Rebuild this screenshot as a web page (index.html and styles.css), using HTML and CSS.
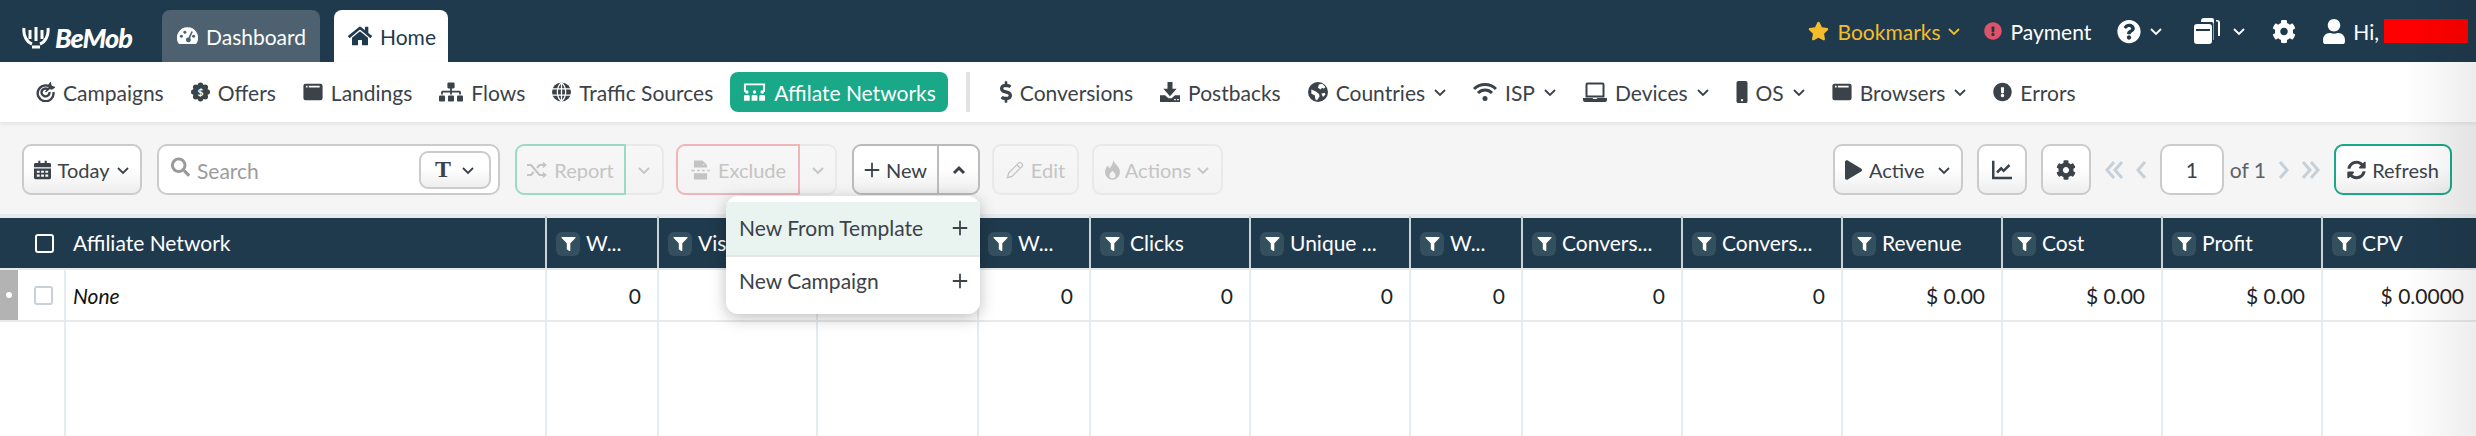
FILE: index.html
```html
<!DOCTYPE html>
<html lang="en">
<head>
  <meta charset="UTF-8">
  <title>BeMob - Affiliate Networks</title>
  <link rel="stylesheet" href="styles.css">
</head>
<body>
  <svg class="sprite" aria-hidden="true">
    <defs>
      <path id="filter" d="M487.976 0H24.028C2.71 0-8.047 25.866 7.058 40.971L192 225.941V432c0 7.831 3.821 15.17 10.237 19.662l80 55.98C298.02 518.69 320 507.493 320 487.98V225.941l184.947-184.97C520.021 25.896 509.338 0 487.976 0z"/>
      <path id="cog" d="M487.4 315.7l-42.6-24.6c4.3-23.2 4.3-47 0-70.2l42.6-24.6c4.9-2.8 7.1-8.6 5.5-14-11.1-35.6-30-67.8-54.7-94.6-3.8-4.1-10-5.1-14.8-2.3L380.8 110c-17.9-15.4-38.5-27.3-60.8-35.1V25.8c0-5.6-3.9-10.5-9.4-11.7-36.7-8.2-74.3-7.8-109.2 0-5.5 1.2-9.4 6.1-9.4 11.7V75c-22.2 7.9-42.8 19.8-60.8 35.1L88.7 85.5c-4.9-2.8-11-1.9-14.8 2.3-24.7 26.7-43.6 58.9-54.7 94.6-1.7 5.4.6 11.2 5.5 14L67.3 221c-4.3 23.2-4.3 47 0 70.2l-42.6 24.6c-4.9 2.8-7.1 8.6-5.5 14 11.1 35.6 30 67.8 54.7 94.6 3.8 4.1 10 5.1 14.8 2.3l42.6-24.6c17.9 15.4 38.5 27.3 60.8 35.1v49.2c0 5.6 3.9 10.5 9.4 11.7 36.7 8.2 74.3 7.8 109.2 0 5.5-1.2 9.4-6.1 9.4-11.7v-49.2c22.2-7.9 42.8-19.8 60.8-35.1l42.6 24.6c4.9 2.8 11 1.9 14.8-2.3 24.7-26.7 43.6-58.9 54.7-94.6 1.5-5.5-.7-11.3-5.6-14.1zM256 336c-44.1 0-80-35.9-80-80s35.9-80 80-80 80 35.9 80 80-35.9 80-80 80z"/>
      <path id="excl" d="M504 256c0 136.997-111.043 248-248 248S8 392.997 8 256C8 119.083 119.043 8 256 8s248 111.083 248 248zm-248 50c-25.405 0-46 20.595-46 46s20.595 46 46 46 46-20.595 46-46-20.595-46-46-46zm-43.673-165.346l7.418 136c.347 6.364 5.609 11.346 11.982 11.346h48.546c6.373 0 11.635-4.982 11.982-11.346l7.418-136c.375-6.874-5.098-12.654-11.982-12.654h-63.383c-6.884 0-12.356 5.78-11.981 12.654z"/>
      <path id="window" fill-rule="evenodd" d="M3 2h18a2.5 2.5 0 0 1 2.5 2.5v15a2.5 2.5 0 0 1-2.5 2.5H3a2.5 2.5 0 0 1-2.5-2.5v-15A2.5 2.5 0 0 1 3 2zM3.5 4.5v2h2v-2zM7 4.5v2h13v-2z"/>
      <polyline id="chev" points="2,4 7,9 12,4" fill="none" stroke="currentColor" stroke-width="1.8"/>
      <path id="plus" d="M10 1v18M1 10h18" fill="none" stroke="currentColor" stroke-width="2.2"/>
    </defs>
  </svg>

  <header class="topbar">
    <a class="logo">
      <svg class="logo-mark" viewBox="0 0 28 24"><path d="M2 3c-1 8 3 14 8 16M26 3c1 8-3 14-8 16M10 22h8M8 5v9M14 2v14M20 5v9" fill="none" stroke="currentColor" stroke-width="3"/></svg>
      <span>BeMob</span>
    </a>
    <a class="tab tab-dark">
      <svg class="ico w21" viewBox="0 0 24 20"><path fill-rule="evenodd" d="M12 0a12 12 0 0 0-10.5 18c.3.6.9 1 1.500 1h18c.6 0 1.200-.4 1.500-1A12 12 0 0 0 12 0zM5 8.500a1.800 1.800 0 1 0 .01 0zM9 4a1.800 1.800 0 1 0 .01 0zM19 8.500a1.800 1.800 0 1 0 .01 0zM16.500 4.500l-3.400 7.100a2.800 2.800 0 1 0 1.900.8l3.100-7.200z"/></svg>
      Dashboard
    </a>
    <a class="tab tab-light">
      <svg class="ico w24" viewBox="0 0 576 512"><path d="M280.37 148.26L96 300.11V464a16 16 0 0 0 16 16l112.06-.29a16 16 0 0 0 15.92-16V368a16 16 0 0 1 16-16h64a16 16 0 0 1 16 16v95.64a16 16 0 0 0 16 16.05L464 480a16 16 0 0 0 16-16V300L295.67 148.26a12.19 12.19 0 0 0-15.3 0zM571.6 251.47L488 182.56V44.05a12 12 0 0 0-12-12h-56a12 12 0 0 0-12 12v72.61L318.47 43a48 48 0 0 0-61 0L4.34 251.47a12 12 0 0 0-1.6 16.9l25.5 31A12 12 0 0 0 45.15 301l235.22-193.74a12.19 12.19 0 0 1 15.3 0L530.9 301a12 12 0 0 0 16.9-1.6l25.5-31a12 12 0 0 0-1.7-16.93z"/></svg>
      Home
    </a>

    <div class="top-right">
      <a class="top-link bookmarks">
        <svg class="ico w21" viewBox="0 0 576 512"><path d="M259.3 17.8L194 150.2 47.9 171.5c-26.2 3.8-36.7 36.1-17.7 54.6l105.7 103-25 145.5c-4.5 26.3 23.2 46 46.4 33.7L288 439.6l130.7 68.7c23.2 12.2 50.9-7.4 46.4-33.7l-25-145.5 105.7-103c19-18.5 8.5-50.8-17.7-54.6L382 150.2 316.7 17.8c-11.7-23.6-45.6-23.9-57.4 0z"/></svg>
        Bookmarks
        <svg class="chev" viewBox="0 0 14 12"><use href="#chev"/></svg>
      </a>
      <a class="top-link payment">
        <svg class="ico w18 red" viewBox="0 0 512 512"><use href="#excl"/></svg>
        Payment
      </a>
      <a class="top-link help">
        <svg class="ico w24" viewBox="0 0 512 512"><path d="M504 256c0 136.997-111.043 248-248 248S8 392.997 8 256C8 119.083 119.043 8 256 8s248 111.083 248 248zM262.655 90c-54.497 0-89.255 22.957-116.549 63.758-3.536 5.286-2.353 12.415 2.715 16.258l34.699 26.31c5.205 3.947 12.621 3.008 16.665-2.122 17.864-22.658 30.113-35.797 57.303-35.797 20.429 0 45.698 13.148 45.698 32.958 0 14.976-12.363 22.667-32.534 33.976C247.128 238.528 216 254.941 216 296v4c0 6.627 5.373 12 12 12h56c6.627 0 12-5.373 12-12v-1.333c0-28.462 83.186-29.647 83.186-106.667 0-58.002-60.165-102-116.531-102zM256 338c-25.365 0-46 20.635-46 46 0 25.364 20.635 46 46 46s46-20.636 46-46c0-25.365-20.635-46-46-46z"/></svg>
        <svg class="chev" viewBox="0 0 14 12"><use href="#chev"/></svg>
      </a>
      <a class="top-link copies">
        <svg class="ico w26" viewBox="0 0 26 26"><path fill-rule="evenodd" d="M3 6h12a3 3 0 0 1 3 3v14a3 3 0 0 1-3 3H3a3 3 0 0 1-3-3V9a3 3 0 0 1 3-3zM2 11v2h14v-2z"/><path d="M7 4V3a3 3 0 0 1 3-3h8a2 2 0 0 1 2 2v20h-.5V6a2 2 0 0 0-2-2zM22 2h1a3 3 0 0 1 3 3v13h-2V5a1 1 0 0 0-2-1z"/></svg>
        <svg class="chev" viewBox="0 0 14 12"><use href="#chev"/></svg>
      </a>
      <a class="top-link gear">
        <svg class="ico w24" viewBox="0 0 512 512"><use href="#cog"/></svg>
      </a>
      <a class="top-link user">
        <svg class="ico w22" viewBox="0 0 448 512"><path d="M224 256c70.7 0 128-57.3 128-128S294.7 0 224 0 96 57.3 96 128s57.3 128 128 128zm89.6 32h-16.7c-22.2 10.2-46.9 16-72.9 16s-50.6-5.8-72.9-16h-16.7C60.2 288 0 348.2 0 422.4V464c0 26.5 21.5 48 48 48h352c26.5 0 48-21.5 48-48v-41.6c0-74.2-60.2-134.4-134.4-134.4z"/></svg>
        Hi,
        <span class="redacted"></span>
      </a>
    </div>
  </header>

  <nav class="subnav">
    <a class="nav-item">
      <svg class="ico w19" viewBox="0 0 24 24"><path d="M20 7.500A10 10 0 1 0 22 12M16 9.500A5 5 0 1 0 17 12" fill="none" stroke="currentColor" stroke-width="3"/><path d="M12 12l8-8M18 1l1 4 4 1-3 2-3-1-1-3z" stroke="currentColor" stroke-width="2"/></svg>
      Campaigns
    </a>
    <a class="nav-item">
      <svg class="ico w19" viewBox="0 0 24 24"><circle cx="12" cy="12" r="9.5"/><circle cx="12" cy="3.5" r="3.5"/><circle cx="12" cy="20.5" r="3.5"/><circle cx="3.5" cy="12" r="3.5"/><circle cx="20.5" cy="12" r="3.5"/><circle cx="6" cy="6" r="3.5"/><circle cx="18" cy="6" r="3.5"/><circle cx="6" cy="18" r="3.5"/><circle cx="18" cy="18" r="3.5"/><text class="badge-dollar" x="12" y="17">$</text></svg>
      Offers
    </a>
    <a class="nav-item">
      <svg class="ico w20" viewBox="0 0 24 24"><use href="#window"/></svg>
      Landings
    </a>
    <a class="nav-item">
      <svg class="ico w24" viewBox="0 0 640 512"><path d="M128 352H32c-17.67 0-32 14.33-32 32v96c0 17.67 14.33 32 32 32h96c17.67 0 32-14.33 32-32v-96c0-17.67-14.33-32-32-32zm-24-80h192v48h48v-48h192v48h48v-57.59c0-21.17-17.23-38.41-38.41-38.41H344v-64h40c17.67 0 32-14.33 32-32V32c0-17.67-14.33-32-32-32H256c-17.67 0-32 14.33-32 32v96c0 17.67 14.33 32 32 32h40v64H94.41C73.23 224 56 241.23 56 262.41V320h48v-48zm264 80h-96c-17.67 0-32 14.33-32 32v96c0 17.67 14.33 32 32 32h96c17.67 0 32-14.33 32-32v-96c0-17.67-14.33-32-32-32zm240 0h-96c-17.67 0-32 14.33-32 32v96c0 17.67 14.33 32 32 32h96c17.67 0 32-14.33 32-32v-96c0-17.67-14.33-32-32-32z"/></svg>
      Flows
    </a>
    <a class="nav-item">
      <svg class="ico w19" viewBox="0 0 24 24"><circle cx="12" cy="12" r="12"/><path d="M12 0c-7 6-7 18 0 24M12 0c7 6 7 18 0 24M12 0v24M0 8h24M0 16h24" fill="none" stroke="#fff" stroke-width="1.6"/></svg>
      Traffic Sources
    </a>
    <a class="nav-item nav-active">
      <svg class="ico w23" viewBox="0 0 24 20"><path d="M2 10V2h20v8" fill="none" stroke="currentColor" stroke-width="2"/><circle cx="4" cy="10" r="1.8"/><circle cx="12" cy="10" r="1.8"/><circle cx="20" cy="10" r="1.8"/><path d="M1 14.5a1.5 1.5 0 0 1 1.5-1.5h3A1.5 1.5 0 0 1 7 14.5V19H1zM9 14.5a1.5 1.5 0 0 1 1.5-1.5h3a1.5 1.5 0 0 1 1.5 1.5V19H9zM17 14.5a1.5 1.5 0 0 1 1.5-1.5h3a1.5 1.5 0 0 1 1.5 1.5V19h-6z"/></svg>
      Affilate Networks
    </a>
    <span class="nav-divider"></span>
    <a class="nav-item">
      <svg class="ico w12" viewBox="0 0 288 512"><path d="M209.2 233.4l-108-31.6C88.7 198.2 80 186.5 80 173.5c0-16.3 13.2-29.5 29.5-29.5h66.3c12.2 0 24.2 3.7 34.2 10.5 6.1 4.1 14.3 3.1 19.5-2l34.8-34c7.1-6.9 6.1-18.4-1.8-24.5C238 74.8 207.4 64.1 176 64V16c0-8.8-7.2-16-16-16h-32c-8.8 0-16 7.2-16 16v48h-2.5C45.8 64-5.4 118.7.5 183.6c4.2 46.1 39.4 83.6 83.8 96.6l102.5 30c12.5 3.7 21.2 15.3 21.2 28.3 0 16.3-13.2 29.5-29.5 29.5h-66.3C100 368 88 364.3 78 357.5c-6.1-4.1-14.3-3.1-19.5 2l-34.8 34c-7.1 6.9-6.1 18.4 1.8 24.5 24.5 19.2 55.1 29.9 86.5 30v48c0 8.8 7.2 16 16 16h32c8.8 0 16-7.2 16-16v-48.2c46.6-.9 90.3-28.6 105.7-72.7 21.5-61.6-14.6-124.8-72.5-141.7z"/></svg>
      Conversions
    </a>
    <a class="nav-item">
      <svg class="ico w20" viewBox="0 0 24 24"><path fill-rule="evenodd" d="M9 0h6v8h5l-8 9-8-9h5zM0 16h6l4 3.5h4l4-3.5h6v8H0zM17 20.5v1.500h2v-1.500zM20.500 20.500v1.500h2v-1.500z"/></svg>
      Postbacks
    </a>
    <a class="nav-item">
      <svg class="ico w20" viewBox="0 0 24 24"><circle cx="12" cy="12" r="12"/><path d="M13 3l4-1 4 4-2 2-2-1-2 2-3-2zM4 9l5 2 4 3 1 3-3 5-2-1-1-5-4-2zM16 14l4-1 1 2-3 3z" fill="#fff"/></svg>
      Countries
      <svg class="chev" viewBox="0 0 14 12"><use href="#chev"/></svg>
    </a>
    <a class="nav-item">
      <svg class="ico w24" viewBox="0 0 24 20"><path d="M1 7c6-6 16-6 22 0M5 11c4-4 10-4 14 0" fill="none" stroke="currentColor" stroke-width="3"/><circle cx="12" cy="16.5" r="2.5"/></svg>
      ISP
      <svg class="chev" viewBox="0 0 14 12"><use href="#chev"/></svg>
    </a>
    <a class="nav-item">
      <svg class="ico w24" viewBox="0 0 24 20"><path d="M4.5 1.5h15a1 1 0 0 1 1 1v12h-17v-12a1 1 0 0 1 1-1z" fill="none" stroke="currentColor" stroke-width="2"/><path d="M0 16h9.500l1 1h3l1-1H24v2a2 2 0 0 1-2 2H2a2 2 0 0 1-2-2z"/></svg>
      Devices
      <svg class="chev" viewBox="0 0 14 12"><use href="#chev"/></svg>
    </a>
    <a class="nav-item">
      <svg class="ico w12" viewBox="0 0 12 24"><path fill-rule="evenodd" d="M2 0h8a2 2 0 0 1 2 2v20a2 2 0 0 1-2 2H2a2 2 0 0 1-2-2V2a2 2 0 0 1 2-2zM6 19.500a1.300 1.300 0 1 0 .01 0z"/></svg>
      OS
      <svg class="chev" viewBox="0 0 14 12"><use href="#chev"/></svg>
    </a>
    <a class="nav-item">
      <svg class="ico w20" viewBox="0 0 24 24"><use href="#window"/></svg>
      Browsers
      <svg class="chev" viewBox="0 0 14 12"><use href="#chev"/></svg>
    </a>
    <a class="nav-item">
      <svg class="ico w19" viewBox="0 0 512 512"><use href="#excl"/></svg>
      Errors
    </a>
  </nav>

  <section class="toolbar">
    <button class="btn btn-today">
      <svg class="ico w17" viewBox="0 0 24 26"><path fill-rule="evenodd" d="M6 0h3v3h6V0h3v3h4a2 2 0 0 1 2 2v4H0V5a2 2 0 0 1 2-2h4zM0 11h24v13a2 2 0 0 1-2 2H2a2 2 0 0 1-2-2zM4 14v3h4v-3zM10 14v3h4v-3zM16 14v3h4v-3zM4 19.500v3h4v-3zM10 19.500v3h4v-3zM16 19.500v3h4v-3z"/></svg>
      Today
      <svg class="chev" viewBox="0 0 14 12"><use href="#chev"/></svg>
    </button>
    <div class="search">
      <svg class="ico w19 search-ico" viewBox="0 0 512 512"><path d="M505 442.7L405.3 343c-4.5-4.5-10.6-7-17-7H372c27.6-35.3 44-79.7 44-128C416 93.1 322.9 0 208 0S0 93.1 0 208s93.1 208 208 208c48.3 0 92.7-16.4 128-44v16.3c0 6.4 2.5 12.5 7 17l99.7 99.7c9.4 9.4 24.6 9.4 33.9 0l28.3-28.3c9.4-9.4 9.4-24.6.1-34zM208 336c-70.7 0-128-57.2-128-128 0-70.7 57.2-128 128-128 70.7 0 128 57.2 128 128 0 70.7-57.2 128-128 128z"/></svg>
      <input class="search-input" type="text" placeholder="Search">
      <button class="btn btn-type">
        <span class="type-t">T</span>
        <svg class="chev" viewBox="0 0 14 12"><use href="#chev"/></svg>
      </button>
    </div>

    <div class="split">
      <button class="btn btn-off btn-report">
        <svg class="ico w20" viewBox="0 0 24 20"><path d="M0 4h5l10 12h5M0 16h5l3-3.6M12 7.6L15 4h5" fill="none" stroke="currentColor" stroke-width="2.6"/><path d="M19 0l5 4-5 4zM19 12l5 4-5 4z"/></svg>
        Report
      </button>
      <button class="btn btn-off btn-caret"><svg class="chev" viewBox="0 0 14 12"><use href="#chev"/></svg></button>
    </div>
    <div class="split">
      <button class="btn btn-off btn-exclude">
        <svg class="ico w21" viewBox="0 0 24 24" fill="none" stroke="currentColor" stroke-width="1.8"><path d="M5 9V1.5h9l5 5V9M5 16v6.500h14V16M14 1.500v5h5M1 12.500h4M8 12.500h3M14 12.500h3M20 12.500h3"/></svg>
        Exclude
      </button>
      <button class="btn btn-off btn-caret btn-caret-x"><svg class="chev" viewBox="0 0 14 12"><use href="#chev"/></svg></button>
    </div>
    <div class="split split-new">
      <button class="btn btn-new">
        <svg class="plus" viewBox="0 0 20 20"><use href="#plus"/></svg>
        New
      </button>
      <button class="btn btn-new-caret">
        <svg class="chev chev-up" viewBox="0 0 14 12"><polyline points="2,9 7,4 12,9" fill="none" stroke="currentColor" stroke-width="3"/></svg>
      </button>
      <div class="dropdown">
        <a class="drop-item drop-hover">New From Template <svg class="plus" viewBox="0 0 20 20"><use href="#plus"/></svg></a>
        <a class="drop-item">New Campaign <svg class="plus" viewBox="0 0 20 20"><use href="#plus"/></svg></a>
      </div>
    </div>
    <button class="btn btn-off btn-edit">
      <svg class="ico w18" viewBox="0 0 24 24"><path d="M2 22l1.5-6L17 2.5a2 2 0 0 1 3 0l1.5 1.5a2 2 0 0 1 0 3L8 20.5zM14.5 5l4.5 4.5" fill="none" stroke="currentColor" stroke-width="1.8"/></svg>
      Edit
    </button>
    <button class="btn btn-off btn-actions">
      <svg class="ico w15" viewBox="0 0 20 26"><path d="M11 0c1 5 9 8 9 16a10 10 0 0 1-20 0c0-4 2-7 4-9l2 4c2-3 5-6 5-11zM10 14c-2 2-4 4-4 6a4 4 0 0 0 8 0c0-2-2-4-4-6z" fill-rule="evenodd"/></svg>
      Actions
      <svg class="chev" viewBox="0 0 14 12"><use href="#chev"/></svg>
    </button>

    <div class="tools-right">
      <button class="btn btn-active">
        <svg class="ico w17" viewBox="0 0 448 512"><path d="M424.4 214.7L72.4 6.6C43.8-10.3 0 6.1 0 47.9V464c0 37.5 40.7 60.1 72.4 41.3l352-208c31.4-18.5 31.5-64.1 0-82.6z"/></svg>
        Active
        <svg class="chev chev-wide" viewBox="0 0 14 12"><use href="#chev"/></svg>
      </button>
      <button class="btn btn-square">
        <svg class="ico w20" viewBox="0 0 24 22"><path d="M1.5 0v20.5H24M6 14l5-5 3 3 7-7" fill="none" stroke="currentColor" stroke-width="3"/></svg>
      </button>
      <button class="btn btn-square">
        <svg class="ico w20" viewBox="0 0 512 512"><use href="#cog"/></svg>
      </button>
      <div class="pager">
        <svg class="pg pg-double" viewBox="0 0 20 20"><path d="M9 2l-7 8 7 8M17 2l-7 8 7 8" fill="none" stroke="currentColor" stroke-width="3"/></svg>
        <svg class="pg pg-single" viewBox="0 0 12 20"><path d="M10 2l-7 8 7 8" fill="none" stroke="currentColor" stroke-width="3"/></svg>
        <input class="page-input" type="text" value="1">
        <span class="page-of">of 1</span>
        <svg class="pg pg-single" viewBox="0 0 12 20"><path d="M2 2l7 8-7 8" fill="none" stroke="currentColor" stroke-width="3"/></svg>
        <svg class="pg pg-double" viewBox="0 0 20 20"><path d="M3 2l7 8-7 8M11 2l7 8-7 8" fill="none" stroke="currentColor" stroke-width="3"/></svg>
      </div>
      <button class="btn btn-refresh">
        <svg class="ico w19" viewBox="0 0 512 512"><path d="M370.72 133.28C339.458 104.008 298.888 87.962 255.848 88c-77.458.068-144.328 53.178-162.791 126.85-1.344 5.363-6.122 9.15-11.651 9.15H24.103c-7.498 0-13.194-6.807-11.807-14.176C33.933 94.924 134.813 8 256 8c66.448 0 126.791 26.136 171.315 68.685L463.03 40.97C478.149 25.851 504 36.559 504 57.941V192c0 13.255-10.745 24-24 24H345.941c-21.382 0-32.09-25.851-16.971-40.971l41.75-41.749zM32 296h134.059c21.382 0 32.09 25.851 16.971 40.971l-41.75 41.75c31.262 29.273 71.835 45.319 114.876 45.28 77.418-.07 144.315-53.144 162.787-126.849 1.344-5.363 6.122-9.15 11.651-9.15h57.304c7.498 0 13.194 6.807 11.807 14.176C478.067 417.076 377.187 504 256 504c-66.448 0-126.791-26.136-171.315-68.685L48.97 471.03C33.851 486.149 8 475.441 8 454.059V320c0-13.255 10.745-24 24-24z"/></svg>
        Refresh
      </button>
    </div>
  </section>

  <section class="table">
    <div class="row row-head">
      <div class="th th-check"><span class="check check-head"></span></div>
      <div class="th th-name">Affiliate Network</div>
      <div class="th"><svg class="fbadge" viewBox="-160 -140 792 792"><use href="#filter"/></svg>W...</div>
      <div class="th"><svg class="fbadge" viewBox="-160 -140 792 792"><use href="#filter"/></svg>Visits</div>
      <div class="th"></div>
      <div class="th"><svg class="fbadge" viewBox="-160 -140 792 792"><use href="#filter"/></svg>W...</div>
      <div class="th"><svg class="fbadge" viewBox="-160 -140 792 792"><use href="#filter"/></svg>Clicks</div>
      <div class="th"><svg class="fbadge" viewBox="-160 -140 792 792"><use href="#filter"/></svg>Unique ...</div>
      <div class="th"><svg class="fbadge" viewBox="-160 -140 792 792"><use href="#filter"/></svg>W...</div>
      <div class="th"><svg class="fbadge" viewBox="-160 -140 792 792"><use href="#filter"/></svg>Convers...</div>
      <div class="th"><svg class="fbadge" viewBox="-160 -140 792 792"><use href="#filter"/></svg>Convers...</div>
      <div class="th"><svg class="fbadge" viewBox="-160 -140 792 792"><use href="#filter"/></svg>Revenue</div>
      <div class="th"><svg class="fbadge" viewBox="-160 -140 792 792"><use href="#filter"/></svg>Cost</div>
      <div class="th"><svg class="fbadge" viewBox="-160 -140 792 792"><use href="#filter"/></svg>Profit</div>
      <div class="th"><svg class="fbadge" viewBox="-160 -140 792 792"><use href="#filter"/></svg>CPV</div>
    </div>
    <div class="row row-data">
      <div class="td td-check"><span class="strip"><i class="strip-dot"></i></span><span class="check"></span></div>
      <div class="td td-name">None</div>
      <div class="td">0</div>
      <div class="td"></div>
      <div class="td"></div>
      <div class="td">0</div>
      <div class="td">0</div>
      <div class="td">0</div>
      <div class="td">0</div>
      <div class="td">0</div>
      <div class="td">0</div>
      <div class="td">$ 0.00</div>
      <div class="td">$ 0.00</div>
      <div class="td">$ 0.00</div>
      <div class="td td-last">$ 0.0000</div>
    </div>
    <div class="row row-empty">
      <div class="td td-check"></div><div class="td"></div><div class="td"></div><div class="td"></div><div class="td"></div>
      <div class="td"></div><div class="td"></div><div class="td"></div><div class="td"></div><div class="td"></div>
      <div class="td"></div><div class="td"></div><div class="td"></div><div class="td"></div><div class="td"></div>
    </div>
  </section>

  <div class="edge-shade"></div>
</body>
</html>
```

FILE: styles.css
```css
/* page */
* {
  box-sizing: border-box;
}
html, body {
  margin: 0;
  padding: 0;
}
body {
  position: relative;
  width: 2476px;
  height: 436px;
  overflow: hidden;
  background-color: #fff;
  font-family: Lato, 'Liberation Sans', sans-serif;
  font-size: 21px;
  color: #3b4249;
}
.sprite {
  position: absolute;
  width: 0;
  height: 0;
}

/* icons */
.ico {
  flex: none;
  fill: currentColor;
  height: 20px;
}
.w12 { width: 12px; height: 22px; }
.w15 { width: 15px; }
.w17 { width: 17px; height: 22px; }
.w18 { width: 18px; }
.w19 { width: 19px; }
.w20 { width: 20px; }
.w21 { width: 21px; }
.w22 { width: 22px; }
.w23 { width: 23px; }
.w24 { width: 24px; height: 22px; }
.w26 { width: 26px; height: 26px; }
.red { color: #e05268; }
.chev {
  flex: none;
  width: 14px;
  height: 12px;
}
.plus {
  flex: none;
  width: 16px;
  height: 16px;
}
.badge-dollar {
  font-size: 13px;
  font-weight: 700;
  fill: #fff;
  text-anchor: middle;
}

/* top bar */
.topbar {
  display: flex;
  align-items: flex-end;
  height: 62px;
  padding-left: 22px;
  background-color: #1f3a4d;
  color: #fff;
}
.logo {
  display: flex;
  align-items: center;
  align-self: center;
  gap: 5px;
  width: 140px;
  font-size: 27px;
  font-weight: 900;
  font-style: italic;
  letter-spacing: -1px;
  margin-top: 12px;
}
.logo-mark {
  width: 28px;
  height: 24px;
}
.tab {
  display: flex;
  align-items: center;
  gap: 8px;
  height: 52px;
  border-radius: 8px 8px 0 0;
}
.tab-dark {
  width: 158px;
  padding-left: 15px;
  background-color: #4d6170;
}
.tab-light {
  width: 114px;
  margin-left: 14px;
  padding-left: 14px;
  background-color: #fff;
  color: #1f3a4d;
}
.top-right {
  display: flex;
  align-items: center;
  align-self: stretch;
  margin-left: auto;
  padding-right: 8px;
}
.top-link {
  display: flex;
  align-items: center;
  gap: 9px;
}
.top-link .w24, .top-link .w22 {
  height: 25px;
}
.bookmarks { color: #f5bd2a; margin-right: 23px; }
.bookmarks .chev { margin-left: -3px; }
.payment { margin-right: 26px; }
.help { margin-right: 31px; gap: 8px; }
.copies { margin-right: 26px; gap: 12px; }
.gear { margin-right: 27px; }
.user { gap: 8px; }
.redacted {
  display: block;
  width: 84px;
  height: 24px;
  margin-left: -3px;
  background-color: #f00;
}

/* second nav */
.subnav {
  position: relative;
  z-index: 2;
  display: flex;
  align-items: center;
  gap: 27px;
  height: 60px;
  padding: 0 0 0 36px;
  background-color: #fff;
  box-shadow: 0 2px 4px rgba(0, 0, 0, 0.08);
}
.nav-item {
  display: flex;
  align-items: center;
  gap: 8px;
  white-space: nowrap;
}
.nav-item .chev {
  margin-right: -1px;
}
.nav-active {
  height: 40px;
  margin-left: -10px;
  padding: 0 12px 0 13px;
  border-radius: 8px;
  background-color: #19a888;
  color: #fff;
}
.nav-divider {
  width: 4px;
  height: 40px;
  margin: 0 3px 0 -9px;
  background-color: #e2e2e2;
}

/* toolbar */
.toolbar {
  display: flex;
  align-items: flex-start;
  height: 92px;
  padding: 22px 24px 0 22px;
  background-color: #f5f5f5;
}
.btn {
  display: flex;
  align-items: center;
  justify-content: center;
  gap: 8px;
  height: 51px;
  padding: 0;
  border: 2px solid #cbcbcb;
  border-radius: 9px;
  background: linear-gradient(#fff 45%, #eeeeee);
  font-family: inherit;
  font-size: 20px;
  color: #3b4249;
}
.btn-today {
  width: 120px;
  gap: 7px;
}
.search {
  display: flex;
  align-items: center;
  width: 343px;
  height: 51px;
  margin: 0 15px;
  padding-left: 12px;
  border: 2px solid #cbcbcb;
  border-radius: 10px;
  background-color: #fff;
}
.search-ico {
  color: #9a9a9a;
  margin-top: -6px;
}
.search-input {
  flex: 1;
  min-width: 0;
  height: 30px;
  margin-top: 2px;
  padding: 0 0 0 7px;
  border: none;
  outline: none;
  background: none;
  font-family: inherit;
  font-size: 21px;
}
.search-input::placeholder {
  color: #9c9c9c;
}
.btn-type {
  width: 72px;
  height: 38px;
  margin-right: 7px;
  gap: 10px;
}
.type-t {
  font-family: 'Liberation Serif', serif;
  font-size: 24px;
  font-weight: 700;
}
.split {
  display: flex;
  margin-right: 12px;
}
.btn-off {
  border-color: #e9e9e9;
  background: linear-gradient(#f7f7f7, #f3f3f3);
  color: #c4c4c4;
}
.btn-report {
  width: 111px;
  gap: 7px;
  border-color: #9bdac8;
  border-radius: 9px 0 0 9px;
}
.btn-exclude {
  width: 124px;
  gap: 7px;
  border-color: #f0b4b9;
  border-radius: 9px 0 0 9px;
}
.btn-caret {
  width: 38px;
  border-left: none;
  border-radius: 0 9px 9px 0;
}
.btn-caret-x {
  width: 37px;
}
.split-new {
  position: relative;
  margin-left: 3px;
}
.btn-new {
  width: 87px;
  gap: 6px;
  border-color: #bbbbbb;
  border-radius: 9px 0 0 9px;
}
.btn-new-caret {
  width: 41px;
  border-color: #bbbbbb;
  border-left: none;
  border-radius: 0 9px 9px 0;
}
.dropdown {
  position: absolute;
  top: 52px;
  right: 0;
  z-index: 5;
  width: 254px;
  height: 118px;
  padding-top: 6px;
  border-radius: 12px;
  background-color: #fff;
  box-shadow: 0 4px 16px rgba(0, 0, 0, 0.25);
}
.drop-item {
  display: flex;
  align-items: center;
  justify-content: space-between;
  height: 47px;
  padding: 0 12px 0 13px;
  white-space: nowrap;
}
.drop-hover {
  height: 55px;
  padding-bottom: 2px;
  background-color: #e9f4f1;
  border-bottom: 2px solid #e4e8e7;
}
.btn-edit {
  width: 87px;
  gap: 7px;
}
.btn-actions {
  width: 131px;
  margin-left: 13px;
  gap: 5px;
}
.tools-right {
  display: flex;
  align-items: flex-start;
  gap: 14px;
  margin-left: auto;
}
.btn-active {
  width: 130px;
  gap: 7px;
}
.chev-wide {
  margin-left: 5px;
}
.btn-square {
  width: 50px;
}
.pager {
  display: flex;
  align-items: center;
  height: 51px;
  color: #c6d0d8;
}
.pg {
  flex: none;
  height: 20px;
}
.pg-double { width: 20px; }
.pg-single { width: 12px; margin: 0 10px; }
.page-input {
  width: 64px;
  height: 51px;
  margin-left: 3px;
  border: 2px solid #cbcbcb;
  border-radius: 10px;
  background-color: #fff;
  outline: none;
  text-align: center;
  font-family: inherit;
  font-size: 21px;
  color: #3b4249;
}
.page-of {
  margin: 0 2px 0 6px;
  color: #5b6269;
}
.btn-refresh {
  width: 118px;
  gap: 6px;
  border-color: #19a888;
}

/* table */
.table {
  padding-top: 4px;
  background-color: #e6eaed;
}
.row {
  display: grid;
  grid-template-columns: 64px 481px 112px 159px 161px 112px 160px 160px 112px 160px 160px 160px 160px 160px 155px;
}
.row-head {
  height: 50px;
  margin-bottom: 2px;
  background-color: #1f3a4d;
  color: #fff;
}
.row-data {
  height: 50px;
  margin-bottom: 2px;
  background-color: #fff;
}
.row-empty {
  height: 114px;
  background-color: #fff;
}
.th {
  position: relative;
  display: flex;
  align-items: center;
  gap: 6px;
  padding: 0 0 2px 9px;
  border-left: 2px solid #cbd2d6;
  white-space: nowrap;
}
.th::before {
  content: "";
  position: absolute;
  top: -2px;
  left: -2px;
  width: 2px;
  height: 2px;
  background-color: #cbd2d6;
}
.th-check {
  padding: 0 0 0 35px;
  border-left: none;
}
.th-check::before, .th-name::before {
  display: none;
}
.th-name {
  padding-left: 9px;
  border-left: none;
}
.fbadge {
  flex: none;
  width: 24px;
  height: 24px;
  margin-top: 4px;
  padding: 1px;
  border-radius: 6px;
  background-color: #34505f;
  fill: #fff;
}
.td {
  position: relative;
  display: flex;
  align-items: center;
  justify-content: flex-end;
  padding-right: 16px;
  border-left: 2px solid #e6ebf0;
  color: #222;
}
.td-check {
  justify-content: flex-start;
  padding: 0 0 0 34px;
  border-left: none;
}
.td-name {
  justify-content: flex-start;
  padding-left: 7px;
  font-style: italic;
  color: #111;
}
.td-last {
  padding-right: 12px;
}
.strip {
  position: absolute;
  top: 0;
  bottom: 0;
  left: 0;
  display: flex;
  align-items: center;
  justify-content: center;
  width: 18px;
  background-color: #b3b3b3;
}
.strip-dot {
  width: 6px;
  height: 6px;
  border-radius: 50%;
  background-color: #fff;
}
.check {
  display: block;
  width: 19px;
  height: 19px;
  border: 2px solid #c5d1dc;
  border-radius: 3px;
  background-color: #fff;
}
.check-head {
  border-color: #fff;
  background: none;
}

/* fade on the right edge */
.edge-shade {
  position: absolute;
  top: 0;
  right: 0;
  bottom: 0;
  z-index: 6;
  width: 70px;
  background: linear-gradient(to right, rgba(0, 0, 0, 0), rgba(0, 0, 0, 0.07));
  pointer-events: none;
}
```
